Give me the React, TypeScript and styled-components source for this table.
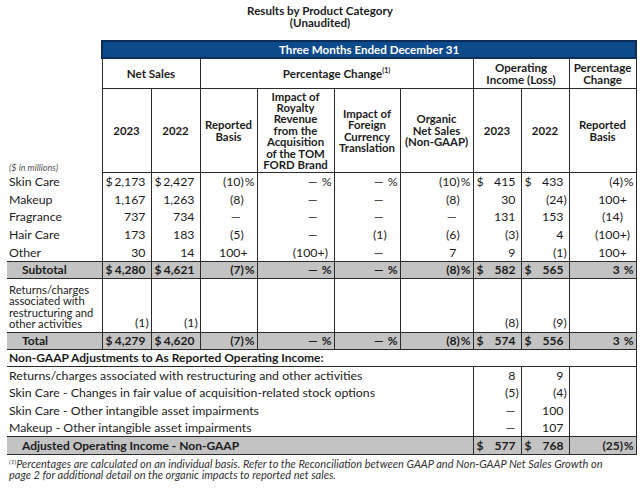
import React from "react";
import styled, { createGlobalStyle } from "styled-components";

const Global = createGlobalStyle`
  html, body { margin: 0; padding: 0; background: #fff; }
  body { font-family: Lato, "Open Sans", sans-serif; color: #1c1c1c; }
`;

const Page = styled.div`
  width: 640px;
  padding: 5px 0 0 7px;
  box-sizing: border-box;
`;

const Title = styled.div`
  width: 626px;
  text-align: center;
  font-weight: 700;
  font-size: 11.6px;
  line-height: 12px;
  margin-bottom: 11px;
`;

const Table = styled.table`
  width: 629px;
  border-collapse: collapse;
  table-layout: fixed;
  font-size: 12.3px;
`;

const LINE = "1.5px solid #2b2b2b";

const BlueCell = styled.th`
  background: #0d4a8c;
  color: #fff;
  border: 2px solid #0b2d57;
  font-size: 11.6px;
  font-weight: 700;
  height: 15px;
  padding: 0;
  text-align: center;
`;

const GroupHead = styled.th`
  border: ${LINE};
  font-size: 11.6px;
  font-weight: 700;
  line-height: 11.6px;
  height: 29px;
  padding: 0 2px;
  text-align: center;
  vertical-align: middle;
`;

const ColHead = styled.th`
  border: ${LINE};
  font-size: 11.4px;
  font-weight: 700;
  line-height: 11.4px;
  height: 83px;
  padding: 0 1px;
  text-align: center;
  vertical-align: middle;
`;

const Sup = styled.sup`
  font-size: 7px;
  line-height: 0;
  vertical-align: 5px;
  font-weight: 700;
`;

const Blank = styled.th`
  padding: 0;
  border: none;
`;

const Units = styled.th`
  padding: 0 0 0 2px;
  border: none;
  text-align: left;
  vertical-align: bottom;
  font-style: italic;
  font-weight: 400;
  font-size: 9px;
  color: #555;
`;

const Row = styled.tr<{ $shade?: boolean; $h: number }>`
  height: ${(p) => p.$h}px;
  background: ${(p) => (p.$shade ? "#c3c3c3" : "transparent")};
  font-weight: ${(p) => (p.$shade ? 700 : 400)};
  font-size: ${(p) => (p.$shade ? "12px" : "12.3px")};
  ${(p) => (p.$shade ? `& > td { border-top: ${LINE}; border-bottom: ${LINE}; }` : "")}
`;

const Label = styled.td<{ $indent?: boolean; $wrap?: boolean }>`
  padding: 0 0 ${(p) => (p.$wrap ? 2 : 0)}px ${(p) => (p.$indent ? 15 : 2)}px;
  white-space: nowrap;
  font-size: ${(p) => (p.$wrap ? "11.2px" : "inherit")};
  line-height: ${(p) => (p.$wrap ? "11.6px" : "normal")};
  vertical-align: ${(p) => (p.$wrap ? "bottom" : "middle")};
  border-left: none;
`;

const Section = styled.td`
  padding: 0 0 0 2px;
  font-weight: 700;
  font-size: 12px;
  white-space: nowrap;
  border-bottom: ${LINE};
  border-right: ${LINE};
`;

const ValCell = styled.td<{ $bottom?: boolean }>`
  border-left: ${LINE};
  border-right: ${LINE};
  padding: 0 0 ${(p) => (p.$bottom ? 2 : 0)}px 0;
  vertical-align: ${(p) => (p.$bottom ? "bottom" : "middle")};
  white-space: nowrap;
`;

const MoneyBox = styled.div<{ $pl: number; $pr: number }>`
  display: flex;
  justify-content: space-between;
  padding: 0 ${(p) => p.$pr}px 0 ${(p) => p.$pl}px;
`;

const PctBox = styled.div`
  text-align: right;
  padding-right: 2px;
`;

const Hang = styled.span`
  display: inline-block;
  width: 0;
  text-align: left;
  white-space: nowrap;
`;

const PctSlot = styled.span`
  display: inline-block;
  width: 14px;
  text-align: right;
`;

const Footnote = styled.div`
  font-style: italic;
  font-size: 11px;
  line-height: 11.5px;
  color: #333;
  padding: 3px 0 0 2px;
`;

const FootSup = styled.sup`
  font-size: 6.5px;
  vertical-align: 4px;
  line-height: 0;
`;

function Num({ v }: { v: string }) {
  const m = v.match(/^(.*?)([)+]*)$/);
  const core = m ? m[1] : v;
  const tail = m ? m[2] : "";
  return (
    <>
      {core}
      {tail ? <Hang>{tail}</Hang> : null}
    </>
  );
}

function Money({ v, sign, pl = 3, pr = 5, bottom }: { v: string; sign?: boolean; pl?: number; pr?: number; bottom?: boolean }) {
  return (
    <ValCell $bottom={bottom}>
      <MoneyBox $pl={pl} $pr={pr}>
        <span>{sign ? "$" : ""}</span>
        <span>
          <Num v={v} />
        </span>
      </MoneyBox>
    </ValCell>
  );
}

function Pct({ v, pct }: { v: string; pct?: boolean }) {
  return (
    <ValCell>
      <PctBox>
        <Num v={v} />
        <PctSlot>{pct ? "%" : ""}</PctSlot>
      </PctBox>
    </ValCell>
  );
}

type DataRow = {
  label: string;
  ns23: string;
  ns22: string;
  rep: string;
  roy: string;
  fx: string;
  org: string;
  oi23: string;
  oi22: string;
  chg: string;
};

const D = "\u2014";

const rows: DataRow[] = [
  { label: "Skin Care", ns23: "2,173", ns22: "2,427", rep: "(10)", roy: D, fx: D, org: "(10)", oi23: "415", oi22: "433", chg: "(4)" },
  { label: "Makeup", ns23: "1,167", ns22: "1,263", rep: "(8)", roy: D, fx: D, org: "(8)", oi23: "30", oi22: "(24)", chg: "100+" },
  { label: "Fragrance", ns23: "737", ns22: "734", rep: D, roy: D, fx: D, org: D, oi23: "131", oi22: "153", chg: "(14)" },
  { label: "Hair Care", ns23: "173", ns22: "183", rep: "(5)", roy: D, fx: "(1)", org: "(6)", oi23: "(3)", oi22: "4", chg: "(100+)" },
  { label: "Other", ns23: "30", ns22: "14", rep: "100+", roy: "(100+)", fx: D, org: "7", oi23: "9", oi22: "(1)", chg: "100+" },
];

const adjustments: { label: string; a: string; b: string }[] = [
  { label: "Returns/charges associated with restructuring and other activities", a: "8", b: "9" },
  { label: "Skin Care - Changes in fair value of acquisition-related stock options", a: "(5)", b: "(4)" },
  { label: "Skin Care - Other intangible asset impairments", a: D, b: "100" },
  { label: "Makeup - Other intangible asset impairments", a: D, b: "107" },
];

const widths = [95, 49, 49, 57, 77, 66, 73, 48, 48, 67];

function TotalRow({ label, ns23, ns22, oi23, oi22, chg }: { label: string; ns23: string; ns22: string; oi23: string; oi22: string; chg: string }) {
  return (
    <Row $shade $h={17}>
      <Label $indent>{label}</Label>
      <Money v={ns23} sign />
      <Money v={ns22} sign />
      <Pct v="(7)" pct />
      <Pct v={D} pct />
      <Pct v={D} pct />
      <Pct v="(8)" pct />
      <Money v={oi23} sign />
      <Money v={oi22} sign />
      <Pct v={chg} pct />
    </Row>
  );
}

export default function App() {
  return (
    <>
      <Global />
      <Page>
        <Title>
          Results by Product Category
          <br />
          (Unaudited)
        </Title>
        <Table>
          <colgroup>
            {widths.map((w, i) => (
              <col key={i} style={{ width: w }} />
            ))}
          </colgroup>
          <thead>
            <tr>
              <Blank />
              <BlueCell colSpan={9}>Three Months Ended December 31</BlueCell>
            </tr>
            <tr>
              <Blank />
              <GroupHead colSpan={2}>Net Sales</GroupHead>
              <GroupHead colSpan={4}>
                Percentage Change<Sup>(1)</Sup>
              </GroupHead>
              <GroupHead colSpan={2}>
                Operating
                <br />
                Income (Loss)
              </GroupHead>
              <GroupHead>
                Percentage
                <br />
                Change
              </GroupHead>
            </tr>
            <tr>
              <Units>($ in millions)</Units>
              <ColHead>2023</ColHead>
              <ColHead>2022</ColHead>
              <ColHead>
                Reported
                <br />
                Basis
              </ColHead>
              <ColHead>
                Impact of
                <br />
                Royalty
                <br />
                Revenue
                <br />
                from the
                <br />
                Acquisition
                <br />
                of the TOM
                <br />
                FORD Brand
              </ColHead>
              <ColHead>
                Impact of
                <br />
                Foreign
                <br />
                Currency
                <br />
                Translation
              </ColHead>
              <ColHead>
                Organic
                <br />
                Net Sales
                <br />
                (Non-GAAP)
              </ColHead>
              <ColHead>2023</ColHead>
              <ColHead>2022</ColHead>
              <ColHead>
                Reported
                <br />
                Basis
              </ColHead>
            </tr>
          </thead>
          <tbody>
            {rows.map((r, i) => {
              const first = i === 0;
              return (
                <Row key={r.label} $h={17.8}>
                  <Label>{r.label}</Label>
                  <Money v={r.ns23} sign={first} />
                  <Money v={r.ns22} sign={first} />
                  <Pct v={r.rep} pct={first} />
                  <Pct v={r.roy} pct={first} />
                  <Pct v={r.fx} pct={first} />
                  <Pct v={r.org} pct={first} />
                  <Money v={r.oi23} sign={first} />
                  <Money v={r.oi22} sign={first} />
                  <Pct v={r.chg} pct={first} />
                </Row>
              );
            })}
            <TotalRow label="Subtotal" ns23="4,280" ns22="4,621" oi23="582" oi22="565" chg="3" />
            <Row $h={54}>
              <Label $wrap>
                Returns/charges
                <br />
                associated with
                <br />
                restructuring and
                <br />
                other activities
              </Label>
              <Money v="(1)" bottom />
              <Money v="(1)" bottom />
              <ValCell />
              <ValCell />
              <ValCell />
              <ValCell />
              <Money v="(8)" bottom />
              <Money v="(9)" bottom />
              <ValCell />
            </Row>
            <TotalRow label="Total" ns23="4,279" ns22="4,620" oi23="574" oi22="556" chg="3" />
            <Row $h={17}>
              <Section colSpan={10}>Non-GAAP Adjustments to As Reported Operating Income:</Section>
            </Row>
            {adjustments.map((a) => (
              <Row key={a.label} $h={17.5}>
                <Label colSpan={7}>{a.label}</Label>
                <Money v={a.a} />
                <Money v={a.b} />
                <ValCell />
              </Row>
            ))}
            <Row $shade $h={18}>
              <Label $indent colSpan={7}>
                Adjusted Operating Income - Non-GAAP
              </Label>
              <Money v="577" sign />
              <Money v="768" sign />
              <Pct v="(25)" pct />
            </Row>
          </tbody>
        </Table>
        <Footnote>
          <FootSup>(1)</FootSup>Percentages are calculated on an individual basis. Refer to the Reconciliation between GAAP and
          Non-GAAP Net Sales Growth on
          <br />
          page 2 for additional detail on the organic impacts to reported net sales.
        </Footnote>
      </Page>
    </>
  );
}
